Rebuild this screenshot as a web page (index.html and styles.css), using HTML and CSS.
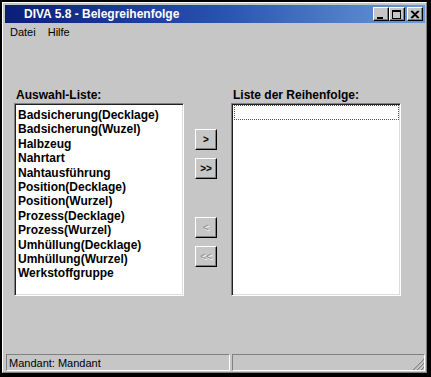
FILE: index.html
```html
<!DOCTYPE html>
<html lang="de">
<head>
    <meta charset="UTF-8">
    <title>DIVA 5.8 - Belegreihenfolge</title>
    <link rel="stylesheet" href="styles.css">
</head>
<body>

    <div class="window">
        <div class="frame">
            <div class="titlebar">
                <span class="title">DIVA 5.8 - Belegreihenfolge</span>
                <div class="caption-buttons">
                    <span class="cap-btn">
                        <svg width="10" height="9" viewBox="0 0 10 9"><rect x="1" y="7" width="6" height="2" fill="#000"/></svg>
                    </span>
                    <span class="cap-btn">
                        <svg width="10" height="9" viewBox="0 0 10 9"><rect x="0.5" y="0.5" width="8" height="8" fill="none" stroke="#000"/><rect x="0" y="0" width="9" height="2" fill="#000"/></svg>
                    </span>
                    <span class="cap-btn close">
                        <svg width="10" height="9" viewBox="0 0 10 9"><path d="M1 1 L8 8 M2 1 L9 8 M8 1 L1 8 M9 1 L2 8" stroke="#000" stroke-width="1.2"/></svg>
                    </span>
                </div>
            </div>

            <div class="menubar">
                <span class="menu-item">Datei</span>
                <span class="menu-item">Hilfe</span>
            </div>

            <div class="client">
                <div class="column">
                    <div class="list-label">Auswahl-Liste:</div>
                    <ul class="listbox">
                        <li>Badsicherung(Decklage)</li>
                        <li>Badsicherung(Wuzel)</li>
                        <li>Halbzeug</li>
                        <li>Nahrtart</li>
                        <li>Nahtausführung</li>
                        <li>Position(Decklage)</li>
                        <li>Position(Wurzel)</li>
                        <li>Prozess(Decklage)</li>
                        <li>Prozess(Wurzel)</li>
                        <li>Umhüllung(Decklage)</li>
                        <li>Umhüllung(Wurzel)</li>
                        <li>Werkstoffgruppe</li>
                    </ul>
                </div>

                <div class="movers">
                    <div class="mover-group">
                        <button class="mover">&gt;</button>
                        <button class="mover">&gt;&gt;</button>
                    </div>
                    <div class="mover-group">
                        <button class="mover" disabled>&lt;</button>
                        <button class="mover" disabled>&lt;&lt;</button>
                    </div>
                </div>

                <div class="column">
                    <div class="list-label">Liste der Reihenfolge:</div>
                    <ul class="listbox">
                        <li class="focus-item"></li>
                    </ul>
                </div>
            </div>

            <div class="statusbar">
                <div class="panel mandant">Mandant: Mandant</div>
                <div class="panel rest">
                    <svg class="grip" width="12" height="12" viewBox="0 0 12 12">
                        <path d="M11 1 L1 11 M11 5 L5 11 M11 9 L9 11" stroke="#fff" stroke-width="1"/>
                        <path d="M12 1 L1 12 M12 5 L5 12 M12 9 L9 12" stroke="#808080" stroke-width="1.2"/>
                    </svg>
                </div>
            </div>
        </div>
    </div>

</body>
</html>
```

FILE: styles.css
```css
/* General styling */
body {
    margin: 0;
    padding: 0;
    background-color: #000;
    font-family: "Liberation Sans", Arial, sans-serif;
}

.window {
    width: 431px;
    height: 377px;
    box-sizing: border-box;
    border-style: solid;
    border-color: #000;
    border-width: 2px 4px 4px 2px;
    background-color: #c6c6c6;
}

.frame {
    height: 100%;
    box-sizing: border-box;
    border-top: 1px solid #fff;
    border-left: 1px solid #fff;
    border-right: 1px solid #808080;
    border-bottom: 1px solid #808080;
    padding: 2px 1px 1px 2px;
    display: flex;
    flex-direction: column;
}

/* Title bar */
.titlebar {
    height: 18px;
    display: flex;
    align-items: center;
    justify-content: space-between;
    background: linear-gradient(90deg, #0a1e78 0%, #2850b0 50%, #6a9ad8 100%);
    padding-left: 19px;
    padding-right: 2px;
}

.title {
    color: #fff;
    font-weight: bold;
    font-size: 12px;
}

.caption-buttons {
    display: flex;
}

.cap-btn {
    width: 16px;
    height: 14px;
    box-sizing: border-box;
    background-color: #c6c6c6;
    border-top: 1px solid #fff;
    border-left: 1px solid #fff;
    border-right: 1px solid #000;
    border-bottom: 1px solid #000;
    box-shadow: inset -1px -1px 0 #808080;
    display: flex;
    align-items: center;
    justify-content: center;
}

.cap-btn.close {
    margin-left: 2px;
}

/* Menu */
.menubar {
    height: 17px;
    display: flex;
    align-items: center;
    padding-left: 5px;
    gap: 12px;
    font-size: 11px;
    color: #000;
}

/* Client area */
.client {
    flex: 1;
    display: flex;
    padding: 48px 0 0 9px;
}

.column {
    width: 170px;
    display: flex;
    flex-direction: column;
}

.list-label {
    font-size: 12px;
    font-weight: bold;
    padding-left: 2px;
    height: 15px;
    line-height: 15px;
}

.listbox {
    list-style: none;
    margin: 0;
    padding: 4px 0 0 3px;
    height: 193px;
    box-sizing: border-box;
    background-color: #fff;
    border-top: 1px solid #808080;
    border-left: 1px solid #808080;
    border-right: 1px solid #fff;
    border-bottom: 1px solid #fff;
    box-shadow: inset 1px 1px 0 #202020, inset -1px -1px 0 #dcdcdc;
}

.listbox li {
    font-size: 12px;
    font-weight: bold;
    line-height: 14.4px;
    color: #000;
    white-space: nowrap;
}

.listbox .focus-item {
    height: 13px;
    margin: -3px 1px 0 -1px;
    border: 1px dotted #555;
}

.movers {
    width: 22px;
    margin: 0 14px 0 11px;
    padding-top: 41px;
    display: flex;
    flex-direction: column;
    gap: 38px;
}

.mover-group {
    display: flex;
    flex-direction: column;
    gap: 8px;
}

.mover {
    width: 22px;
    height: 21px;
    padding: 0;
    background-color: #c6c6c6;
    border-top: 1px solid #fff;
    border-left: 1px solid #fff;
    border-right: 1px solid #000;
    border-bottom: 1px solid #000;
    box-shadow: inset -1px -1px 0 #808080;
    font-family: "Liberation Sans", Arial, sans-serif;
    font-size: 10px;
    font-weight: bold;
    color: #000;
}

.mover:disabled {
    color: #8a8a8a;
    font-weight: normal;
    text-shadow: 1px 1px 0 #fff;
}

/* Status bar */
.statusbar {
    height: 17px;
    display: flex;
    gap: 2px;
    padding: 0 0 0 1px;
    font-size: 11px;
}

.panel {
    box-sizing: border-box;
    border-top: 1px solid #808080;
    border-left: 1px solid #808080;
    border-right: 1px solid #fff;
    border-bottom: 1px solid #fff;
    display: flex;
    align-items: center;
}

.mandant {
    width: 224px;
    padding-left: 2px;
}

.rest {
    flex: 1;
    position: relative;
}

.grip {
    position: absolute;
    right: 0;
    bottom: 0;
}
```
